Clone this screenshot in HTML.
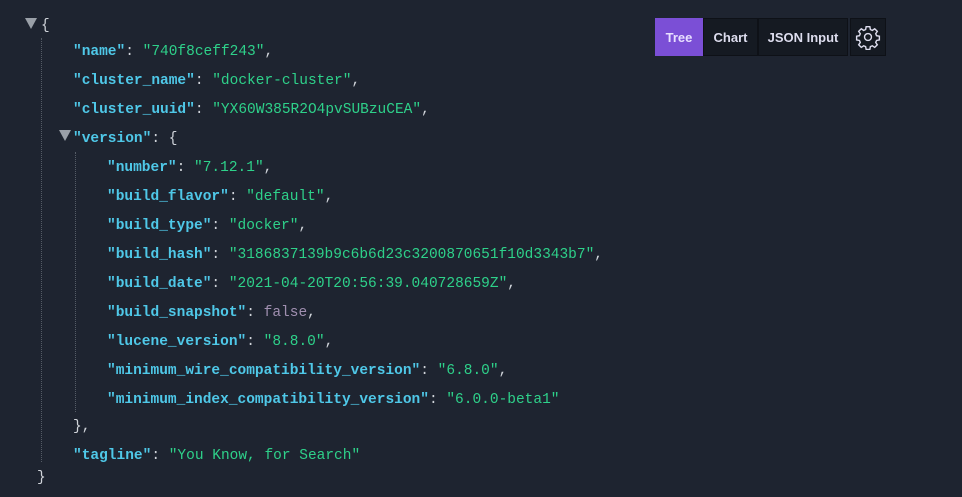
<!DOCTYPE html><html><head><style>
body{margin:0;width:962px;height:497px;background:#1e2430;overflow:hidden;font-family:"Liberation Mono","Noto Sans CJK SC",monospace;font-size:14.5px;color:#d0d4da}
.l{position:absolute;white-space:pre;line-height:20px;margin-top:2px}
.k{color:#4fc8e8;font-weight:bold}
.s{color:#2ed18a}
.b{color:#a08fb0}
.tri{position:absolute;width:0;height:0;border-left:6px solid transparent;border-right:6px solid transparent;border-top:11px solid #9aa0a8}
.g{position:absolute;border-left:1px dotted #555c66;width:0}
.btns{position:absolute;left:655px;top:18px;display:flex;height:38px;font-family:"Liberation Sans",sans-serif;font-weight:bold;font-size:13px;color:#dde}
.btns div{display:flex;align-items:center;justify-content:center;background:#151a22;border:1px solid #0e1117}
</style></head><body>
<div class="tri" style="left:25px;top:18px"></div>
<div class="l" style="left:41px;top:14px">{</div>
<div class="g" style="left:41px;top:38px;height:424px"></div>
<div class="l" style="left:73px;top:40px"><span class="k">"name"</span>: <span class="s">"740f8ceff243"</span>,</div>
<div class="l" style="left:73px;top:69px"><span class="k">"cluster_name"</span>: <span class="s">"docker-cluster"</span>,</div>
<div class="l" style="left:73px;top:98px"><span class="k">"cluster_uuid"</span>: <span class="s">"YX60W385R2O4pvSUBzuCEA"</span>,</div>
<div class="tri" style="left:59px;top:130px"></div>
<div class="l" style="left:73px;top:127px"><span class="k">"version"</span>: {</div>
<div class="g" style="left:75px;top:152px;height:260px"></div>
<div class="l" style="left:107px;top:156px"><span class="k">"number"</span>: <span class="s">"7.12.1"</span>,</div>
<div class="l" style="left:107px;top:185px"><span class="k">"build_flavor"</span>: <span class="s">"default"</span>,</div>
<div class="l" style="left:107px;top:214px"><span class="k">"build_type"</span>: <span class="s">"docker"</span>,</div>
<div class="l" style="left:107px;top:243px"><span class="k">"build_hash"</span>: <span class="s">"3186837139b9c6b6d23c3200870651f10d3343b7"</span>,</div>
<div class="l" style="left:107px;top:272px"><span class="k">"build_date"</span>: <span class="s">"2021-04-20T20:56:39.040728659Z"</span>,</div>
<div class="l" style="left:107px;top:301px"><span class="k">"build_snapshot"</span>: <span class="b">false</span>,</div>
<div class="l" style="left:107px;top:330px"><span class="k">"lucene_version"</span>: <span class="s">"8.8.0"</span>,</div>
<div class="l" style="left:107px;top:359px"><span class="k">"minimum_wire_compatibility_version"</span>: <span class="s">"6.8.0"</span>,</div>
<div class="l" style="left:107px;top:388px"><span class="k">"minimum_index_compatibility_version"</span>: <span class="s">"6.0.0-beta1"</span></div>
<div class="l" style="left:73px;top:415px">},</div>
<div class="l" style="left:73px;top:444px"><span class="k">"tagline"</span>: <span class="s">"You Know, for Search"</span></div>
<div class="l" style="left:37px;top:466px">}</div>
<div class="btns">
<div style="width:46px;background:#7b4fd6;border-color:#7b4fd6;color:#e8e0ff">Tree</div>
<div style="width:53px">Chart</div>
<div style="width:88px">JSON Input</div>
<div style="width:34px;margin-left:2px"><svg width="26" height="26" viewBox="0 0 24 24" fill="none" stroke="#dde" stroke-width="1.3"><circle cx="12" cy="12" r="3.2"/><path d="M10.3 2.5h3.4l.5 2.6 1.8.8 2.2-1.5 2.4 2.4-1.5 2.2.8 1.8 2.6.5v3.4l-2.6.5-.8 1.8 1.5 2.2-2.4 2.4-2.2-1.5-1.8.8-.5 2.6h-3.4l-.5-2.6-1.8-.8-2.2 1.5-2.4-2.4 1.5-2.2-.8-1.8-2.6-.5v-3.4l2.6-.5.8-1.8-1.5-2.2 2.4-2.4 2.2 1.5 1.8-.8z"/></svg></div>
</div>
</body></html>
